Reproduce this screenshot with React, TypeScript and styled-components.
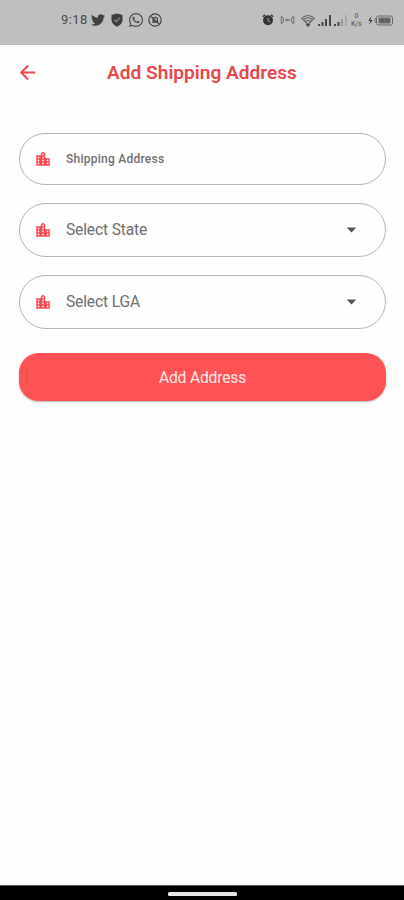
import React from "react";
import styled, { createGlobalStyle } from "styled-components";
import { MdArrowBack, MdLocationCity, MdArrowDropDown } from "react-icons/md";
import { FaTwitter, FaWhatsapp } from "react-icons/fa";

const GlobalStyle = createGlobalStyle`
  * { box-sizing: border-box; }
  body { margin: 0; background: #fefefe; font-family: Roboto, sans-serif; }
`;

const Screen = styled.div`
  height: 900px;
  display: flex;
  flex-direction: column;
  background: #fefefe;
`;

const StatusBar = styled.div`
  height: 45px;
  flex: none;
  background: #bfbfbf;
  color: #4a4a4a;
  display: flex;
  justify-content: space-between;
  padding: 10px 11px 15px 61px;
`;

const StatusGroup = styled.div`
  display: flex;
  align-items: center;
  svg { display: block; }
`;

const Clock = styled.span`
  width: 30px;
  font-size: 13px;
  letter-spacing: 0.4px;
  line-height: 20px;
`;

const Slot = styled.span<{ $gap?: number }>`
  margin-left: ${(p) => p.$gap ?? 0}px;
`;

const Speed = styled.span`
  width: 13px;
  margin-left: 3px;
  display: flex;
  flex-direction: column;
  align-items: center;
  font-size: 7px;
  font-weight: 500;
  line-height: 8px;
  color: #666;
`;

const Header = styled.header`
  height: 56px;
  flex: none;
  display: grid;
  grid-template-columns: 56px 1fr 56px;
  align-items: center;
  color: #e8474b;
`;

const BackButton = styled.button`
  border: 0;
  background: none;
  padding: 0 0 2px 16px;
  color: inherit;
  display: flex;
  font-size: 23px;
`;

const Title = styled.h1`
  margin: 0;
  text-align: center;
  font-size: 19.1px;
  font-weight: 600;
  line-height: 24px;
  white-space: nowrap;
`;

const Form = styled.main`
  flex: 1;
  display: flex;
  flex-direction: column;
  padding: 32px 18px 0 19px;
`;

const Field = styled.div<{ $height: number; $gap: number }>`
  height: ${(p) => p.$height}px;
  margin-bottom: ${(p) => p.$gap}px;
  display: flex;
  align-items: center;
  border: 1px solid #b4b4b4;
  border-radius: 27px;
  padding: 0 22px 0 14px;
`;

const FieldIcon = styled(MdLocationCity)`
  color: #f74a4e;
  font-size: 18px;
`;

const Label = styled.span<{ $small?: boolean }>`
  flex: 1;
  margin-left: 14px;
  color: ${(p) => (p.$small ? "#707070" : "#6e6e6e")};
  font-size: ${(p) => (p.$small ? 12 : 15.6)}px;
  font-weight: ${(p) => (p.$small ? 500 : 400)};
  letter-spacing: ${(p) => (p.$small ? 0.25 : -0.15)}px;
`;

const Caret = styled(MdArrowDropDown)`
  color: #555;
  font-size: 23px;
  margin-bottom: 1px;
`;

const Submit = styled.button`
  height: 48px;
  margin-top: 5px;
  padding: 1px 0 0;
  border: 0;
  border-radius: 20px;
  background: #ff5254;
  color: #ffe9e7;
  font: 400 15.6px Roboto, sans-serif;
  letter-spacing: -0.15px;
  box-shadow: 0 1px 2px rgba(110, 60, 60, 0.4);
`;

const NavBar = styled.div`
  height: 15px;
  flex: none;
  background: #000;
  border-top: 1px solid #555;
  padding-top: 6px;
`;

const HomeHandle = styled.div`
  width: 69px;
  height: 4px;
  margin: 0 auto;
  border-radius: 1.5px;
  background: #e6e6e6;
`;

const ShieldIcon = () => (
  <svg width="12" height="14" viewBox="0 0 12 14">
    <path d="M6 .5 11.5 2v5c0 3-2.4 5.3-5.5 6.7C2.9 12.3.5 10 .5 7V2z" fill="#3e3e3e" />
    <path d="m3.3 6.5 2 2 3.7-3.8" fill="none" stroke="#858585" strokeWidth="1.3" />
  </svg>
);

const CompassIcon = () => (
  <svg width="14" height="14" viewBox="0 0 14 14" fill="none" stroke="#444" strokeWidth="1.2">
    <circle cx="7" cy="7" r="6.2" />
    <path d="M3 3.5 11 11M5 10V6.5a2.3 2.3 0 0 1 4.5-.5v3" />
    <path d="m5.5 6.5 3.5 3-3.5.5z" fill="#444" stroke="none" />
  </svg>
);

const AlarmIcon = () => (
  <svg width="12" height="12" viewBox="0 0 12 12" fill="none">
    <circle cx="6" cy="6.2" r="5" fill="#343434" />
    <path d="M.8 2.8 3 .9M11.2 2.8 9 .9" stroke="#343434" strokeWidth="1.5" />
    <path d="M6 3.7v3l2.2 1.2" stroke="#aaa" />
  </svg>
);

const HotspotIcon = () => (
  <svg width="15" height="10" viewBox="0 0 15 10" fill="none" stroke="#777" strokeWidth="1.1">
    <path d="M1.3 1.2v7.6M13.7 1.2v7.6M1.5 1.2Q6 5 1.5 8.8M13.5 1.2Q9 5 13.500 8.800M5 5h5" />
    <circle cx="7.5" cy="5" r=".8" fill="#666" />
  </svg>
);

const WifiIcon = () => (
  <svg width="14" height="13" viewBox="0 0 14 13" fill="none" stroke="#626262" strokeWidth="1.1">
    <path d="M.8 4.2Q7-1.3 13.2 4.2L7 10.5zM2.8 5.5Q7 2 11.2 5.5M4.7 7.5Q7 5.5 9.3 7.5" />
    <path d="M4.5 10.2h5L7 13z" fill="#3d3d3d" stroke="none" />
  </svg>
);

const SignalIcon = ({ weak = false }: { weak?: boolean }) => (
  <svg width="13" height="11" viewBox="0 0 13 11" fill="#474747">
    <path d="M0 9h2v2H0zM3.5 7h2v4h-2z" />
    <path d="M7 4h2v7H7z" fill={weak ? "#9b9b9b" : "#474747"} />
    <path d="M11 0h2v11h-2z" fill={weak ? "#a8a8a8" : "#474747"} />
  </svg>
);

const BatteryIcon = () => (
  <svg width="25" height="11" viewBox="0 0 25 11" fill="none">
    <path d="M3.5 1 .3 6h2L1 10l3.7-5H2.5z" fill="#414141" />
    <rect x="8.500" y="1" width="16" height="9" rx="2" stroke="#666" />
    <path d="M8.5 3.500H7v4h1.500" stroke="#777" />
    <rect x="10.5" y="2.500" width="12" height="6" rx="1" fill="#6a6a6a" />
    <path d="M13 5.500h3M18 5.500h2.500" stroke="#555" strokeWidth="2" />
  </svg>
);

export default function App() {
  return (
    <Screen>
      <GlobalStyle />
      <StatusBar>
        <StatusGroup>
          <Clock>9:18</Clock>
          <Slot><FaTwitter size={14} color="#414141" /></Slot>
          <Slot $gap={6}><ShieldIcon /></Slot>
          <Slot $gap={5}><FaWhatsapp size={16} color="#4c4c4c" /></Slot>
          <Slot $gap={4}><CompassIcon /></Slot>
        </StatusGroup>
        <StatusGroup>
          <AlarmIcon />
          <Slot $gap={6}><HotspotIcon /></Slot>
          <Slot $gap={6}><WifiIcon /></Slot>
          <Slot $gap={3}><SignalIcon /></Slot>
          <Slot $gap={3}><SignalIcon weak /></Slot>
          <Speed><span>0</span><span>K/s</span></Speed>
          <Slot $gap={5}><BatteryIcon /></Slot>
        </StatusGroup>
      </StatusBar>
      <Header>
        <BackButton aria-label="Back"><MdArrowBack /></BackButton>
        <Title>Add Shipping Address</Title>
      </Header>
      <Form>
        <Field $height={52} $gap={18}>
          <FieldIcon />
          <Label $small>Shipping Address</Label>
        </Field>
        <Field $height={54} $gap={18}>
          <FieldIcon />
          <Label>Select State</Label>
          <Caret />
        </Field>
        <Field $height={54} $gap={19}>
          <FieldIcon />
          <Label>Select LGA</Label>
          <Caret />
        </Field>
        <Submit>Add Address</Submit>
      </Form>
      <NavBar><HomeHandle /></NavBar>
    </Screen>
  );
}
